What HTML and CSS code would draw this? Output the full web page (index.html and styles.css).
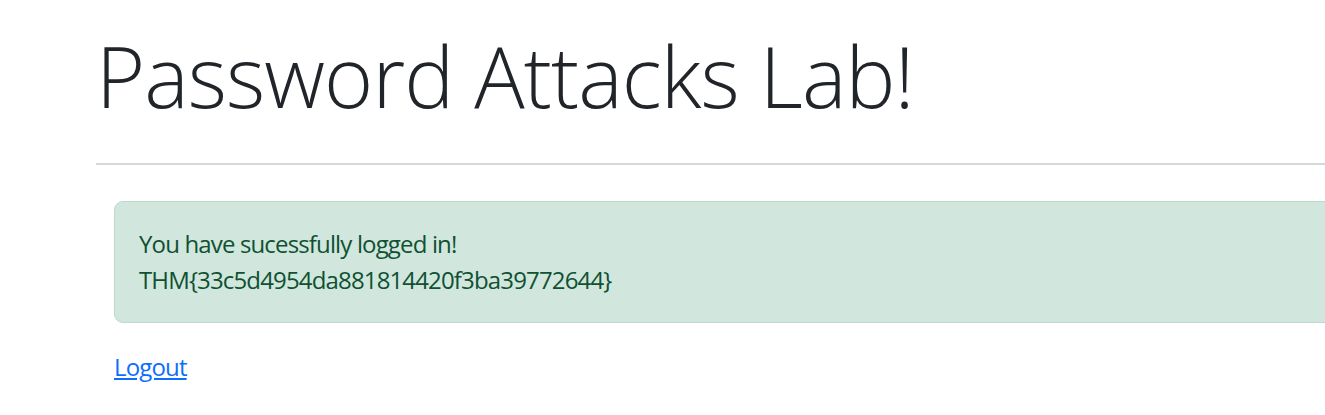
FILE: index.html
```html
<!DOCTYPE html>
<html lang="en">
<head>
<meta charset="utf-8">
<title>Password Attacks Lab</title>
<link rel="stylesheet" href="styles.css">
</head>
<body>
<div class="page">
  <h1 class="title">Password Attacks Lab!</h1>
  <hr class="rule">
  <div class="content">
    <div class="alert">You have sucessfully logged in!<br>THM{33c5d4954da881814420f3ba39772644}</div>
    <a class="logout" href="#">Logout</a>
  </div>
</div>
</body>
</html>
```
FILE: styles.css
```css
html, body {
  margin: 0;
  padding: 0;
  background: #ffffff;
  overflow: hidden;
}
body {
  font-family: "Open Sans", "Noto Sans", sans-serif;
  font-size: 24px;
  line-height: 1.5;
  color: #212529;
  letter-spacing: -0.85px;
}
.page {
  width: 1400px;
  margin-left: 96px;
  padding-top: 26px;
}
.title {
  margin: 0;
  font-size: 84px;
  font-weight: 300;
  line-height: 1.2;
  color: #212529;
  letter-spacing: -0.9px;
}
.rule {
  margin: 36px 0 0 0;
  border: 0;
  border-top: 2px solid #d6d7d8;
  height: 0;
}
.content {
  padding-left: 18px;
  padding-top: 36px;
}
.alert {
  padding: 24px;
  border: 1px solid #badbcc;
  border-radius: 9px;
  background: #d1e7dd;
  color: #0f5132;
  margin-bottom: 26px;
}
.logout {
  color: #0d6efd;
  text-decoration: underline;
}
```
